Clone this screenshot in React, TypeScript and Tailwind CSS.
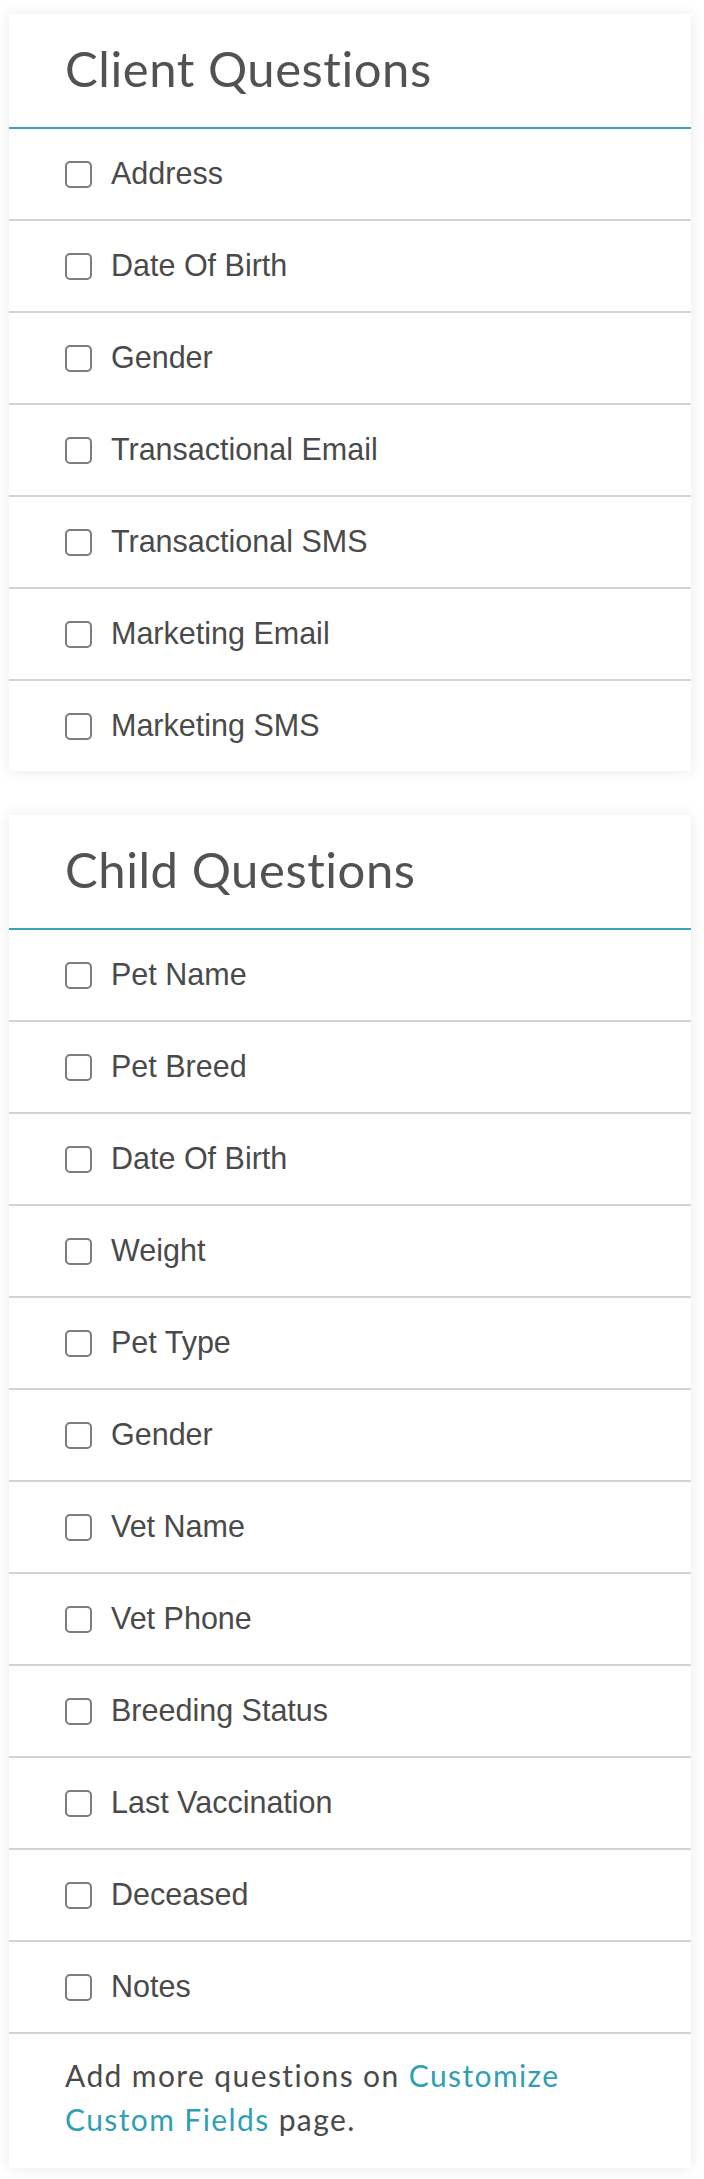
import React from 'react';

const clientQuestions = [
  'Address',
  'Date Of Birth',
  'Gender',
  'Transactional Email',
  'Transactional SMS',
  'Marketing Email',
  'Marketing SMS',
];

const childQuestions = [
  'Pet Name',
  'Pet Breed',
  'Date Of Birth',
  'Weight',
  'Pet Type',
  'Gender',
  'Vet Name',
  'Vet Phone',
  'Breeding Status',
  'Last Vaccination',
  'Deceased',
  'Notes',
];

const QuestionRow: React.FC<{ label: string; first: boolean }> = ({ label, first }) => (
  <label
    className={`flex h-[90px] items-center pl-[56px] cursor-pointer box-content ${
      first ? '' : 'border-t-2 border-[#d3d3d3]'
    }`}
  >
    <input type="checkbox" className="peer sr-only" />
    <span className="h-[27px] w-[27px] shrink-0 rounded-[5px] border-2 border-[#7d7d7d] bg-white" />
    <span className="ml-[19px] text-[30.5px] text-[#4a4a4a] [font-family:'Liberation_Sans',Arial,sans-serif]">
      {label}
    </span>
  </label>
);

const QuestionCard: React.FC<{ title: string; items: string[]; footer?: React.ReactNode }> = ({
  title,
  items,
  footer,
}) => (
  <section className="ml-[9px] w-[682px] bg-white shadow-[0_0_14px_rgba(0,0,0,0.09)]">
    <div className="h-[115px] border-b-2 border-[#38a3ba] pl-[56px] pt-[30px]">
      <h2 className="text-[49px] font-normal leading-[49px] tracking-[0.55px] text-[#525252] [font-family:Lato,'Open_Sans',sans-serif]">
        {title}
      </h2>
    </div>
    {items.map((item, i) => (
      <QuestionRow key={item} label={item} first={i === 0} />
    ))}
    {footer}
  </section>
);

export default function App() {
  return (
    <div className="min-h-[2179px] bg-white pt-[14px] pb-[12px]">
      <QuestionCard title="Client Questions" items={clientQuestions} />
      <div className="h-[44px]" />
      <QuestionCard
        title="Child Questions"
        items={childQuestions}
        footer={
          <div className="border-t-2 border-[#d3d3d3] pl-[56px] pt-[19px] pb-[27px]">
            <p className="text-[30px] leading-[44px] tracking-[1.4px] text-[#4a4a4a] [font-family:Lato,'Open_Sans',sans-serif]">
              Add more questions on <a href="#" className="text-[#2f9fb5]">Customize</a>
              <br />
              <a href="#" className="text-[#2f9fb5]">Custom Fields</a> page.
            </p>
          </div>
        }
      />
    </div>
  );
}
